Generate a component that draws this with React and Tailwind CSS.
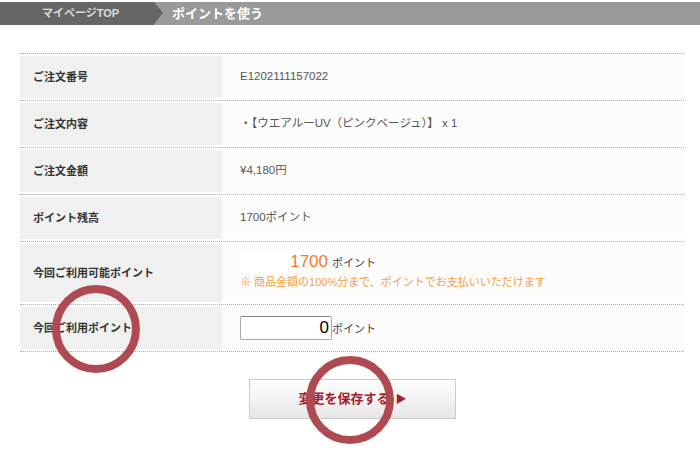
import React, { useState } from 'react';

const rows = [
  { label: 'ご注文番号', value: 'E1202111157022' },
  { label: 'ご注文内容', value: '・【ウエアルーUV（ピンクベージュ）】 x 1' },
  { label: 'ご注文金額', value: '¥4,180円' },
  { label: 'ポイント残高', value: '1700ポイント' },
];

const Ring = ({ className }) => (
  <svg className={className} width="92" height="92" viewBox="0 0 92 92">
    <circle cx="46" cy="46" r="40" fill="none" stroke="#b04a52" strokeWidth="8" />
  </svg>
);

const App = () => {
  const [points, setPoints] = useState('0');

  return (
    <div className="relative w-[700px] h-[453px] bg-white overflow-hidden text-[#333]" style={{ fontFamily: '"Liberation Sans", "Noto Sans CJK JP", sans-serif' }}>
      {/* breadcrumb */}
      <div className="mt-[2px] flex h-[23px] bg-[#9a9a9a]">
        <div className="relative flex w-[154px] items-center bg-[#666] pl-[42px] text-[11px] font-bold text-[#ddd]">
          マイページTOP
          <span className="absolute right-[-9px] top-0 h-0 w-0 border-y-[11.5px] border-l-[9px] border-y-transparent border-l-[#666]" />
        </div>
        <div className="flex items-center pl-[18px] text-[13px] font-bold text-white">ポイントを使う</div>
      </div>

      {/* table */}
      <div className="mx-[20px] mt-[28px] w-[664px] text-[11px]">
        {rows.map((r) => (
          <div key={r.label} className="flex border-t border-dotted border-[#aaa] py-[2px]">
            <div className="flex h-[42px] w-[202px] items-center bg-[#f0f0f0] pl-[13px] font-bold text-[#333]">{r.label}</div>
            <div className="flex h-[42px] flex-1 items-center bg-[#fcfcfc] pl-[18px] text-[11.5px] text-[#555]">{r.value}</div>
          </div>
        ))}
        <div className="flex border-t border-dotted border-[#aaa] py-[2px]">
          <div className="flex h-[58px] w-[202px] items-center bg-[#f0f0f0] pl-[13px] font-bold text-[#333]">今回ご利用可能ポイント</div>
          <div className="flex h-[58px] flex-1 flex-col justify-center bg-[#fcfcfc] pb-[3px] pl-[18px]">
            <div className="flex items-end">
              <span className="inline-block w-[88px] bg-white text-right text-[17px] leading-[20px] text-[#f07c2c]">1700</span>
              <span className="ml-[4px] text-[11px] leading-[17px] text-[#444]">ポイント</span>
            </div>
            <div className="mt-[2px] text-[#f3a13f]">※ 商品金額の100%分まで、ポイントでお支払いいただけます</div>
          </div>
        </div>
        <div className="flex border-t border-b border-dotted border-[#aaa] py-[2px]">
          <div className="flex h-[42px] w-[202px] items-center bg-[#f0f0f0] pl-[13px] font-bold text-[#333]">今回ご利用ポイント</div>
          <div className="flex h-[42px] flex-1 items-center bg-[#fcfcfc] pl-[18px] text-[#444]">
            <input
              value={points}
              onChange={(e) => setPoints(e.target.value)}
              className="h-[24px] w-[92px] rounded-[2px] border border-[#aaa] border-t-[#888] bg-white px-[2px] text-right text-[17px] text-black outline-none"
            />
            <span className="mt-[2px]">ポイント</span>
          </div>
        </div>
      </div>

      {/* save button */}
      <div className="mt-[27px] flex justify-center">
        <button className="ml-[5px] flex h-[40px] w-[207px] items-center justify-center border border-[#ccc] bg-gradient-to-b from-white to-[#e6e6e6] text-[13px] font-bold text-[#a3202a]">
          変更を保存する
          <span className="ml-[6px] text-[11px]">▶</span>
        </button>
      </div>

      {/* annotation rings */}
      <Ring className="absolute left-[50px] top-[283px]" />
      <Ring className="absolute left-[304px] top-[354px]" />
    </div>
  );
};

export default App;
